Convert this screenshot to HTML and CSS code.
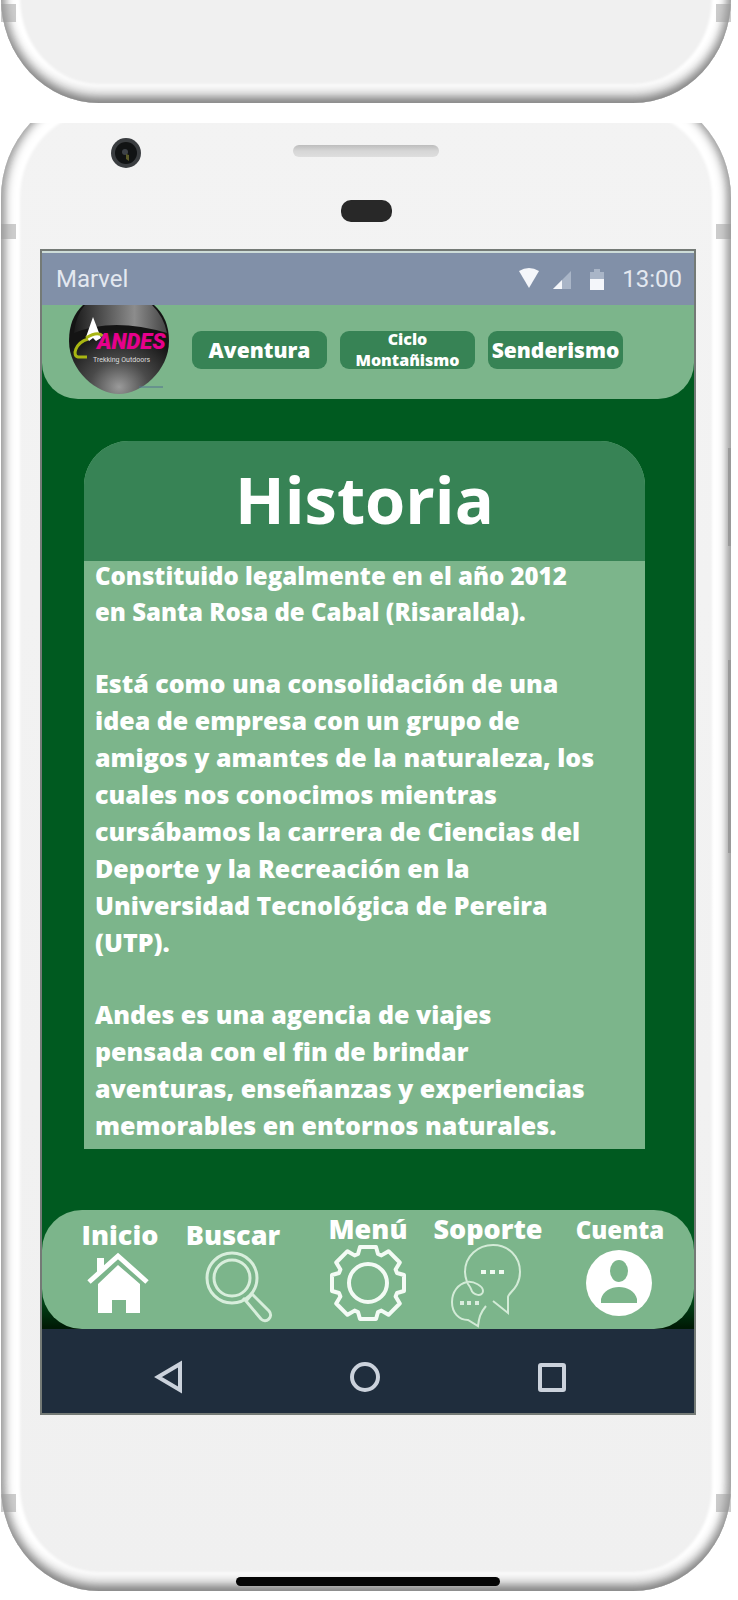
FILE: index.html
```html
<!DOCTYPE html>
<html lang="es">
<head>
<meta charset="utf-8">
<meta name="viewport" content="width=device-width, initial-scale=1">
<title>Historia</title>
<link rel="stylesheet" href="styles.css">
</head>
<body>
<div class="shell shell-end"><span class="seam seam-left seam-end"></span><span class="seam seam-right seam-end"></span></div>
<div class="shell phone">
  <span class="seam seam-left seam-top"></span><span class="seam seam-right seam-top"></span>
  <span class="seam seam-left seam-low"></span><span class="seam seam-right seam-low"></span>
  <span class="side side-power"></span><span class="side side-volume"></span>
  <div class="bezel">
    <svg class="camera" viewBox="0 0 30 30" aria-hidden="true"><circle cx="15" cy="15" r="15" fill="#3a3d40"/><circle cx="15" cy="15" r="11" fill="#111314"/><circle cx="14" cy="14" r="3" fill="#3d4147"/><path d="M15 16l3 1v6l-3-2z" fill="#5a5a2a"/></svg>
    <div class="sensors"><span class="speaker"></span><span class="sensor"></span></div>
  </div>
  <div class="screen">
    <div class="status">
      <span>Marvel</span>
      <span class="status-icons">
        <svg class="status-svg" viewBox="0 0 88 24" aria-hidden="true"><path d="M0 4q10-6 20 0L10 21z" fill="#f4f6fa"/><path d="M52 4v18H34z" fill="#a9b5c7"/><path d="M43 13v9h-9z" fill="#f4f6fa"/><path d="M75 2h6v3h4v8H71V5h4z" fill="#a9b5c7"/><path d="M71 12h14v11H71z" fill="#f4f6fa"/></svg>
        <span>13:00</span>
      </span>
    </div>
    <header class="top">
      <svg class="logo" viewBox="0 0 102 89" role="img" aria-label="Andes">
        <defs><radialGradient id="ball" cx=".5" cy=".92" r=".65"><stop offset="0" stop-color="#9a9a9a"/><stop offset=".45" stop-color="#4a4a4a"/><stop offset="1" stop-color="#141414"/></radialGradient>
        <linearGradient id="shine" x1="0" x2="1"><stop offset="0" stop-color="#1b1b1b"/><stop offset=".65" stop-color="#8c8c8c"/><stop offset="1" stop-color="#444"/></linearGradient></defs>
        <path d="M15 0H86Q101 13 101 36C101 66 73 89 51 89S1 66 1 36Q1 13 15 0z" fill="url(#ball)"/>
        <path d="M17 0H84Q96 12 99 28Q45 12 6 28Q8 10 17 0z" fill="url(#shine)"/>
        <path d="M18 32L25 12l8 21-5 3-3-3-4 3z" fill="#fff"/>
        <path d="M20 34C7 38 4 51 10 52h9M18 33c8-5 14-5 17-2" fill="none" stroke="#a8b512" stroke-width="3"/>
        <text class="logo-name" x="29" y="44" fill="#e6008c">ANDES</text>
        <text class="logo-tag" x="25" y="57" fill="#ddd">Trekking Outdoors</text>
        <path d="M71 82h24" stroke="#53718f" stroke-width="1"/>
      </svg>
      <nav class="chips">
        <button class="chip">Aventura</button>
        <button class="chip chip-small">Ciclo<br>Montañismo</button>
        <button class="chip">Senderismo</button>
      </nav>
    </header>
    <main class="card">
      <h1 class="title">Historia</h1>
      <div class="story">
        <p class="lead">Constituido legalmente en el año 2012<br>en Santa Rosa de Cabal (Risaralda).</p>
        <p>Está como una consolidación de una<br>idea de empresa con un grupo de<br>amigos y amantes de la naturaleza, los<br>cuales nos conocimos mientras<br>cursábamos la carrera de Ciencias del<br>Deporte y la Recreación en la<br>Universidad Tecnológica de Pereira<br>(UTP).</p>
        <p>Andes es una agencia de viajes<br>pensada con el fin de brindar<br>aventuras, enseñanzas y experiencias<br>memorables en entornos naturales.</p>
      </div>
    </main>
    <nav class="tabs">
      <button class="tab tab-home"><span class="label label-low">Inicio</span>
        <svg class="icon" viewBox="0 0 84 84" aria-hidden="true"><path d="M19 14h7v8l-7 7z" fill="#fff"/><path d="M11 38L40 12l29 26" fill="none" stroke="#fff" stroke-width="5"/><path d="M20 40L40 21l22 19v29H48V56H34v13H20z" fill="#fff"/></svg></button>
      <button class="tab tab-search"><span class="label label-low">Buscar</span>
        <svg class="icon" viewBox="0 0 84 84" fill="none" stroke="#d8eedc" stroke-width="3" aria-hidden="true"><circle cx="41" cy="34" r="25"/><circle cx="41" cy="34" r="18"/><path d="M55 57l6-7 17 17c5 6-3 13-8 8L55 57l-3-3"/></svg></button>
      <button class="tab tab-menu"><span class="label">Menú</span>
        <svg class="icon" viewBox="-42 -39 84 84" fill="none" stroke="#f4fbf5" stroke-width="4" stroke-linejoin="round" aria-hidden="true"><path d="M-10-29L-8-36H8L10-29L13.400-27.600L20.500-31.800L31.800-20.500L27.600-13.400L29-10L36-8V8L29 10L27.600 13.400L31.800 20.500L20.500 31.800L13.400 27.600L10 29L8 36H-8L-10 29L-13.400 27.600L-20.500 31.800L-31.800 20.500L-27.600 13.400L-29 10L-36 8V-8L-29-10L-27.600-13.400L-31.800-20.500L-20.500-31.800L-13.400-27.600z"/><circle r="19"/></svg></button>
      <button class="tab tab-help"><span class="label">Soporte</span>
        <svg class="icon" viewBox="2 0 84 84" fill="none" stroke="#d3ebd7" stroke-width="2" aria-hidden="true"><path d="M49 57l15 12V53c0-4 12-9 12-25C76 12 64 1 49 1S21 12 21 28c0 4 1 7 2 10M23 38C14 40 8 48 8 58c0 11 7 18 16 18l10 6c1-8 2-13 8-20M23 38c7-1 16 4 16 9 0 6-10 5-12-2-1-3-3-4-4-7"/><g fill="#f0faf1" stroke="none"><path d="M37 26h5v4h-5zM46 26h5v4h-5zM55 26h5v4h-5z"/><path d="M16 57h4v4h-4zM23 57h4v4h-4zM31 57h4v4h-4z" opacity=".8"/></g></svg></button>
      <button class="tab tab-user"><span class="label label-small">Cuenta</span>
        <svg class="icon" viewBox="0 0 84 84" aria-hidden="true"><circle cx="41" cy="39" r="33" fill="#fff"/><ellipse cx="41" cy="27" rx="9" ry="11" fill="#7cb58b"/><path d="M23 59v-4c2-8 10-12 18-12s16 4 18 12v4z" fill="#7cb58b"/></svg></button>
    </nav>
    <div class="system">
      <button class="key" aria-label="Atrás"><svg class="key-icon" viewBox="0 0 34 34"><path d="M6 17L28 4v26z"/></svg></button>
      <button class="key" aria-label="Inicio del sistema"><svg class="key-icon" viewBox="0 0 34 34"><circle cx="17" cy="17" r="13"/></svg></button>
      <button class="key" aria-label="Recientes"><svg class="key-icon" viewBox="0 0 34 34"><rect x="5" y="5" width="24" height="25" rx="1"/></svg></button>
    </div>
  </div>
  <span class="indicator"></span>
</div>
</body>
</html>
```
FILE: styles.css
```css
* { box-sizing: border-box; }
body { margin: 0; background: #fff; color: #fff; font-family: "Open Sans", sans-serif; font-weight: 800; }
button { border: 0; padding: 0; background: none; color: inherit; font: inherit; cursor: pointer; }
h1, p { margin: 0; }
svg { display: block; }

/* The body outline runs past the visible edge, so each shell is cut off straight. */
.shell { position: relative; isolation: isolate; margin: 0 7px 0 1px; overflow: hidden; }
.shell::before {
  content: "";
  position: absolute;
  inset: -30px 0 0;
  z-index: -1;
  background: linear-gradient(#f3f3f3, #f0f0f0);
  border-radius: 98px / 105px;
  box-shadow: inset 0 -5px 6px #888, inset 0 -12px 10px #d0d0d0, inset 5px 0 8px #aaa, inset -5px 0 8px #aaa, inset 0 0 3px 19px #fff;
}
.shell-end { height: 103px; margin-bottom: 20px; }
.shell-end::before { top: -150px; background: #f0f0f0; }
.phone { padding: 0 35px 5px 39px; }

.seam { position: absolute; width: 15px; height: 18px; background: #999; opacity: .5; }
.seam-left { left: 0; }
.seam-right { right: 0; }
.seam-end { top: 4px; }
.seam-top { top: 101px; height: 15px; }
.seam-low { bottom: 79px; }
.side { position: absolute; right: 0; width: 3px; background: #999; }
.side-power { top: 325px; height: 98px; }
.side-volume { top: 537px; height: 193px; }

.bezel { display: grid; grid-template-columns: 1fr 145px 1fr; height: 126px; margin: 0 0 0 -4px; }
.camera { width: 30px; height: 30px; margin: 15px 0 0 75px; }
.sensors { display: flex; flex-direction: column; align-items: center; gap: 43px; padding-top: 22px; }
.speaker { width: 146px; height: 12px; border-radius: 6px; background: linear-gradient(#bdbdbd, #d6d6d6 50%, #dedede); }
.sensor { width: 51px; height: 22px; border-radius: 10px; background: #282828; }

.screen {
  border: 2px solid #747a76;
  background: linear-gradient(#005a20 calc(100% - 125px), #001a05 calc(100% - 86px));
}
.status {
  display: flex; justify-content: space-between; align-items: center;
  height: 54px; padding: 0 12px 0 14px;
  border-top: 2px solid #cddcd8; background: #8190a8;
  color: #e3e8f0; font: 400 24px/28px Roboto, sans-serif;
}
.status-icons { display: flex; align-items: center; gap: 15px; }
.status-svg { width: 88px; height: 24px; }

.top { display: flex; gap: 22px; height: 94px; padding-left: 26px; background: #7cb58b; border-radius: 0 0 36px 36px; }
.logo { width: 102px; height: 89px; }
.logo-name { font: italic 900 22px Roboto, sans-serif; }
.logo-tag { font: 400 7px Roboto, sans-serif; }
.chips { display: flex; gap: 13px; padding-top: 26px; }
.chip { width: 135px; height: 38px; border-radius: 9px; background: #378355; font-size: 21px; line-height: 24px; white-space: nowrap; display: flex; justify-content: center; align-items: center; }
.chip-small { font-size: 16px; line-height: 21px; }

.card { margin: 42px 49px 61px 42px; background: #7cb58b; border-radius: 45px 45px 0 0; }
.title { height: 120px; background: #378355; border-radius: 45px 45px 0 0; font-size: 65px; line-height: 116px; text-align: center; }
.story { display: flex; flex-direction: column; gap: 35px; margin-top: -3px; padding: 0 0 5px 11px; font-size: 25px; line-height: 37px; white-space: nowrap; }
.lead { font-size: 24px; line-height: 36px; }

.tabs {
  display: grid;
  grid-template-columns: 38fr 80fr 24fr 98fr 46fr 80fr 24fr 112fr 32fr 88fr 30fr;
  height: 119px; background: #7cb58b; border-radius: 40px;
}
.tab { display: flex; flex-direction: column; align-items: center; min-width: 0; }
.tab-home { grid-column: 2; }
.tab-search { grid-column: 4; }
.tab-menu { grid-column: 6; }
.tab-help { grid-column: 8; }
.tab-user { grid-column: 10; }
.label { height: 34px; font-size: 27px; line-height: 38px; }
.label-low { line-height: 50px; }
.label-small { font-size: 24px; line-height: 40px; }
.icon { width: 84px; height: 84px; flex: none; }

.system {
  display: grid; grid-template-columns: 196fr 196fr 178fr; align-items: center;
  height: 84px; padding: 11px 53px 0 29px;
  background: #1f2d3d;
}
.key { display: flex; justify-content: center; }
.key-icon { width: 34px; height: 34px; fill: none; stroke: #cbd2dc; stroke-width: 4; }

.indicator { display: block; width: 264px; height: 9px; margin: 162px auto 0; border-radius: 5px; background: #050505; }
```
